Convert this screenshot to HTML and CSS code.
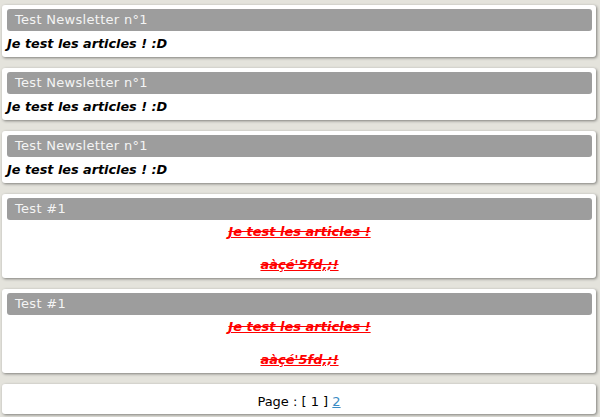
FILE: index.html
```html
<!DOCTYPE html>
<html lang="fr">
<head>
<meta charset="utf-8">
<title>Newsletters</title>
<link rel="stylesheet" href="styles.css">
</head>
<body>
<div class="list">
  <div class="card">
    <div class="card-title">Test Newsletter n°1</div>
    <div class="card-body"><p class="lead">Je test les articles ! :D</p></div>
  </div>
  <div class="card">
    <div class="card-title">Test Newsletter n°1</div>
    <div class="card-body"><p class="lead">Je test les articles ! :D</p></div>
  </div>
  <div class="card">
    <div class="card-title">Test Newsletter n°1</div>
    <div class="card-body"><p class="lead">Je test les articles ! :D</p></div>
  </div>
  <div class="card">
    <div class="card-title">Test #1</div>
    <div class="card-body center">
      <p class="red">Je test les articles !</p>
      <p class="red">aàçé'5fd,;!</p>
    </div>
  </div>
  <div class="card">
    <div class="card-title">Test #1</div>
    <div class="card-body center">
      <p class="red">Je test les articles !</p>
      <p class="red">aàçé'5fd,;!</p>
    </div>
  </div>
  <div class="card pager">
    Page : [ 1 ] <a href="#" class="page-link">2</a>
  </div>
</div>
</body>
</html>
```

FILE: styles.css
```css
html, body {
  margin: 0;
  padding: 0;
}
body {
  background: #e4e3dc;
  font-family: "DejaVu Sans", Verdana, sans-serif;
  font-size: 13px;
  color: #000;
  width: 600px;
  height: 417px;
  overflow: hidden;
}
.list {
  display: flex;
  flex-direction: column;
  gap: 11px;
  padding: 5px 4px 0 2px;
}
.card {
  background: #fff;
  border-radius: 3px;
  box-shadow: 1px 1px 3px rgba(0, 0, 0, 0.45);
  padding: 4px 4px 0 5px;
}
.card-title {
  background: #9d9d9d;
  color: #f4f4f4;
  height: 22px;
  line-height: 22px;
  border-radius: 3px;
  padding-left: 8px;
  font-size: 13px;
  letter-spacing: 0.3px;
}
.card-body {
  padding: 4px 0 5px 0;
}
.card-body p {
  margin: 0;
  line-height: 17px;
}
.lead {
  font-weight: bold;
  font-style: italic;
  font-size: 12.8px;
}
.center {
  text-align: center;
  padding: 3px 0 5px 0;
  display: flex;
  flex-direction: column;
  gap: 16px;
}
.red {
  color: #ff0000;
  font-weight: bold;
  font-style: italic;
  text-decoration: underline line-through;
}
.pager {
  height: 27px;
  padding: 3px 0 0 0;
  text-align: center;
  line-height: 30px;
}
.page-link {
  color: #3a8cc4;
  text-decoration: underline;
}
```
